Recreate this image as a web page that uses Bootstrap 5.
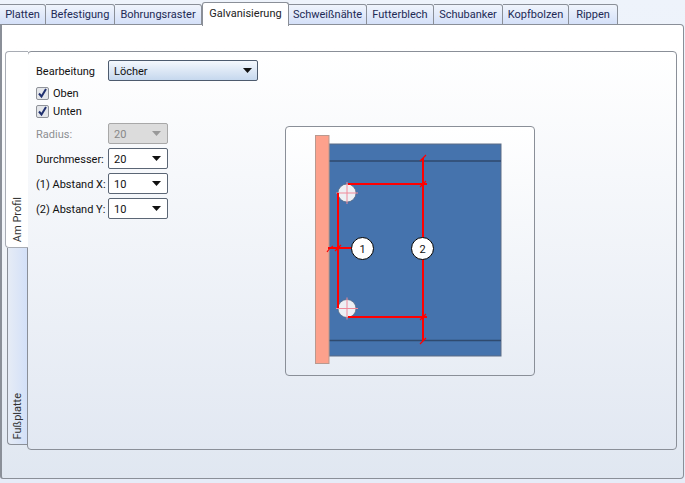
<!DOCTYPE html>
<html lang="de">
<head>
<meta charset="utf-8">
<title>Galvanisierung</title>
<link href="https://cdn.jsdelivr.net/npm/bootstrap@5.3.0/dist/css/bootstrap.min.css" rel="stylesheet">
<style>
html,body{margin:0;height:483px;overflow:hidden}
body{width:685px;background:linear-gradient(#eef3fb,#e6ecf8);font-family:Roboto,"Open Sans",sans-serif;font-size:11px;line-height:16px;color:#111}
.tabstrip{height:25px;align-items:flex-end;position:relative;z-index:2}
.tabitem{height:21px;border:1px solid #8a8f98;border-left:0;border-radius:0 3px 0 0;background:linear-gradient(#f0f4fc,#d4e0f8);color:#222a55;text-align:center;line-height:20px;white-space:nowrap;flex:none}
.tabitem.live{height:24px;background:#fff;border-bottom:0;border-left:1px solid #8a8f98;border-radius:3px 3px 0 0;color:#222;margin-bottom:-1px;line-height:21px;padding-bottom:3px}
.w46{width:46px}.w69{width:69px}.w87{width:87px}.w78{width:78px}.w67{width:67px}.w66{width:66px}.w49{width:49px}
.shell{width:684px;height:455px;margin-top:-1px;border:1px solid #8a8f98;border-left-width:2px;border-radius:0 4px 4px 3px;background:linear-gradient(#fff 0,#fff 5%,#e0e7f1 100%);padding:26px 5px 27px 3px}
.sidewrap{height:399px}
.siderail{width:22px;flex:none;position:relative;z-index:1}
.sidetab{display:flex;justify-content:center;align-items:flex-end;height:197px;color:#333}
.sidetab span{writing-mode:vertical-rl;transform:rotate(180deg);white-space:nowrap;padding-top:5px;line-height:17px}
.sidetab.on{background:#fff;border:1px solid #a8acb4;border-right:0;border-radius:4px 0 0 4px;width:23px;margin-right:-1px;position:relative}
.sidetab.off{width:20px;margin-left:2px;background:linear-gradient(90deg,#e6ecf6,#d3e0f8);border:1px solid #8a8f98;border-top:0;border-right:0;border-radius:0 0 0 4px}
.pagearea{width:650px;height:399px;border:1px solid #8a8f98;border-radius:4px;background:linear-gradient(#fff,#e2e8f2);padding:8px 0 0 8px}
.formcol{width:222px;flex:none}
.frow{display:flex;align-items:center;margin-bottom:4px}
.lab{width:72px;flex:none;white-space:nowrap;padding-top:2px}
.lab.dim{color:#8d8f92}
.combo.form-select{height:21px;padding:2px 4px 0 5px;font-size:11px;line-height:18px;color:#111;border:1px solid #5b6675;border-radius:2px;background-color:#fff;background-image:url("data:image/svg+xml,%3Csvg xmlns='http://www.w3.org/2000/svg' width='9' height='5'%3E%3Cpath d='M0 0h9L4.5 5z' fill='%23111'/%3E%3C/svg%3E");background-repeat:no-repeat;background-position:right 6px center;background-size:9px 5px;box-shadow:none;font-family:inherit;opacity:1}
.combo.narrow{width:60px}
.combo.wide{width:150px;background-image:url("data:image/svg+xml,%3Csvg xmlns='http://www.w3.org/2000/svg' width='9' height='5'%3E%3Cpath d='M0 0h9L4.5 5z' fill='%23111'/%3E%3C/svg%3E"),linear-gradient(#f4f8fd,#c6d8ee);background-size:9px 5px,100% 100%;background-position:right 5px center,0 0;border-color:#4d5b6e}
.combo.off:disabled{background-color:#dcdcdc;color:#888;border-color:#a8a8a8;background-image:url("data:image/svg+xml,%3Csvg xmlns='http://www.w3.org/2000/svg' width='9' height='5'%3E%3Cpath d='M0 0h9L4.5 5z' fill='%23999'/%3E%3C/svg%3E")}
.tick.form-check-input{width:13px;height:13px;margin:0 4px 0 0;float:none;border:1px solid #8f9299;border-radius:2px;background-color:#e4e6ea;background-image:url("data:image/svg+xml,%3Csvg xmlns='http://www.w3.org/2000/svg' viewBox='0 0 13 13'%3E%3Cpath d='M3 6.5l2.5 3L10 2' fill='none' stroke='%2320306f' stroke-width='2'/%3E%3C/svg%3E");background-size:13px 13px;box-shadow:none}
.tickrow{height:18px;display:flex;align-items:center}
.tickrow label{padding-top:2px}
.tickgroup{margin-top:-1px;margin-bottom:3px}
.stagebox{width:250px;height:250px;margin-top:66px;margin-left:27px;border:1px solid #8a8f98;border-radius:4px;background:linear-gradient(#fff,#e8edf5);flex:none;overflow:hidden}
.stagebox svg{display:block;margin:-1px}
</style>
</head>
<body>
<div class="d-flex tabstrip">
  <div class="tabitem w46">Platten</div>
  <div class="tabitem w69">Befestigung</div>
  <div class="tabitem w87">Bohrungsraster</div>
  <div class="tabitem live w87">Galvanisierung</div>
  <div class="tabitem w78">Schweißnähte</div>
  <div class="tabitem w67">Futterblech</div>
  <div class="tabitem w69">Schubanker</div>
  <div class="tabitem w66">Kopfbolzen</div>
  <div class="tabitem w49">Rippen</div>
</div>
<div class="shell">
  <div class="d-flex sidewrap">
    <div class="siderail d-flex flex-column">
      <div class="sidetab on"><span>Am Profil</span></div>
      <div class="sidetab off"><span>Fußplatte</span></div>
    </div>
    <div class="pagearea d-flex">
      <div class="formcol">
        <div class="frow"><span class="lab">Bearbeitung</span><select class="form-select combo wide"><option>Löcher</option></select></div>
        <div class="tickgroup">
          <div class="tickrow"><input class="form-check-input tick" type="checkbox" checked id="c1"><label for="c1">Oben</label></div>
          <div class="tickrow"><input class="form-check-input tick" type="checkbox" checked id="c2"><label for="c2">Unten</label></div>
        </div>
        <div class="frow"><span class="lab dim">Radius:</span><select class="form-select combo narrow off" disabled><option>20</option></select></div>
        <div class="frow"><span class="lab">Durchmesser:</span><select class="form-select combo narrow"><option>20</option></select></div>
        <div class="frow"><span class="lab">(1) Abstand X:</span><select class="form-select combo narrow"><option>10</option></select></div>
        <div class="frow"><span class="lab">(2) Abstand Y:</span><select class="form-select combo narrow"><option>10</option></select></div>
      </div>
      <div class="stagebox">
        <svg width="250" height="250" viewBox="285 126 250 250" xmlns="http://www.w3.org/2000/svg" font-family="Roboto, sans-serif">
          <rect x="329" y="144" width="172" height="212" fill="#4573ad" stroke="#5c6d85" stroke-width="1"/>
          <path d="M329 161H501M329 340.500H501" stroke="#2f4a6e" stroke-width="1.400" fill="none"/>
          <rect x="315.500" y="135.500" width="13.500" height="228" fill="#fda18c" stroke="#b9998f" stroke-width="1"/>
          <circle cx="347" cy="193" r="9" fill="#eef0f4" stroke="#5a6a80" stroke-width=".7"/>
          <circle cx="347" cy="308.500" r="9" fill="#eef0f4" stroke="#5a6a80" stroke-width=".7"/>
          <path d="M336 193H358M347 182V204M336 308.500H358M347 297.500V319.500" stroke="#f08a9a" stroke-width="1" fill="none"/>
          <path d="M348 184H427M348 317H427M338 193V308M423 158V341M328 248H352" stroke="#ff0000" stroke-width="2" fill="none"/>
          <path d="M420 187L426 181M420 320L426 314M420 161L426 155M420 344L426 338M335 251L341 245M327 252C329 249 331 247 333 246" stroke="#ff0000" stroke-width="1.200" fill="none"/>
          <circle cx="362.500" cy="248.500" r="11" fill="#fff" stroke="#000" stroke-width="1"/>
          <circle cx="422.500" cy="248.500" r="11" fill="#fff" stroke="#000" stroke-width="1"/>
          <text x="362.500" y="252.500" text-anchor="middle" font-size="11" fill="#111">1</text>
          <text x="422.500" y="252.500" text-anchor="middle" font-size="11" fill="#111">2</text>
        </svg>
      </div>
    </div>
  </div>
</div>
<script src="https://cdn.jsdelivr.net/npm/bootstrap@5.3.0/dist/js/bootstrap.bundle.min.js"></script>
</body>
</html>
